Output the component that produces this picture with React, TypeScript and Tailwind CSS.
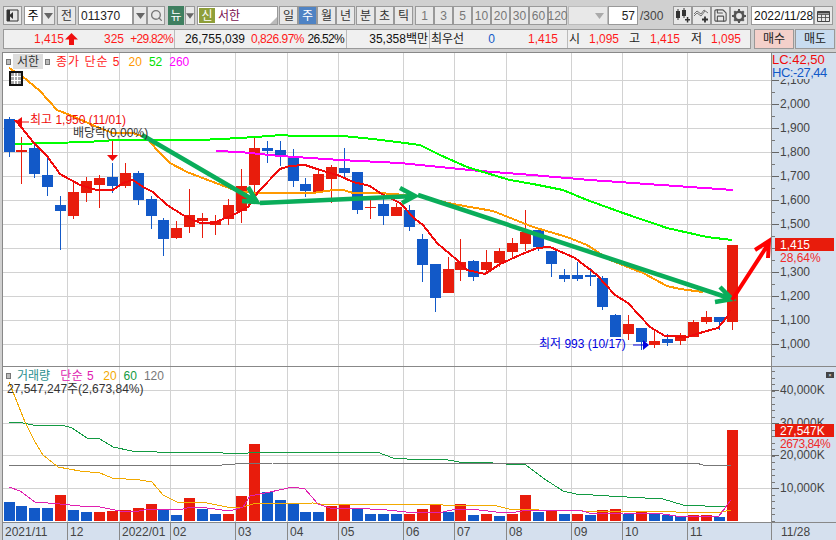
import { Save, Search } from "lucide-react";

const RED = "#e81c0c";
const BLUE = "#1259c8";
const GRID_X = [67, 119, 170, 235, 287, 338, 403, 454, 506, 571, 622, 687];

// x, color, wick top, body top, body bottom, wick bottom
const candles: [number, string, number, number, number, number][] = [
  [9.5, BLUE, 117, 119, 152, 157],
  [21.5, RED, 137, 150, 152, 184],
  [34.5, BLUE, 142, 148, 174, 178],
  [47.5, BLUE, 156, 175, 187, 196],
  [60.5, BLUE, 196, 205, 211, 250],
  [73.5, RED, 183, 192, 216, 219],
  [86.5, RED, 177, 181, 193, 202],
  [99.5, RED, 175, 178, 185, 208],
  [112.5, BLUE, 163, 177, 186, 193],
  [125.5, RED, 163, 173, 186, 188],
  [138.5, BLUE, 171, 173, 200, 205],
  [151.5, BLUE, 196, 199, 216, 229],
  [163.5, BLUE, 218, 220, 239, 256],
  [176.5, RED, 221, 228, 238, 239],
  [189.5, RED, 189, 215, 227, 233],
  [202.5, RED, 213, 218, 221, 238],
  [215.5, RED, 215, 221, 225, 235],
  [228.5, RED, 199, 205, 219, 225],
  [241.5, RED, 169, 186, 211, 223],
  [254.5, RED, 137, 148, 185, 193],
  [267.5, BLUE, 141, 148, 151, 163],
  [280.5, BLUE, 141, 150, 157, 166],
  [293.5, BLUE, 149, 157, 181, 187],
  [305.5, BLUE, 178, 184, 191, 197],
  [318.5, RED, 171, 174, 192, 193],
  [331.5, RED, 165, 167, 179, 203],
  [344.5, BLUE, 148, 168, 173, 177],
  [357.5, BLUE, 172, 172, 210, 214],
  [370.5, RED, 199, 207, 208, 219],
  [383.5, BLUE, 199, 204, 216, 225],
  [396.5, RED, 203, 207, 216, 216],
  [409.5, BLUE, 205, 210, 227, 231],
  [422.5, BLUE, 234, 239, 265, 282],
  [435.5, BLUE, 264, 264, 298, 312],
  [448.5, RED, 257, 269, 293, 293],
  [460.5, RED, 239, 262, 270, 281],
  [473.5, BLUE, 260, 261, 277, 281],
  [486.5, RED, 250, 262, 270, 274],
  [499.5, RED, 248, 251, 263, 267],
  [512.5, RED, 238, 243, 252, 259],
  [525.5, RED, 210, 232, 244, 251],
  [538.5, BLUE, 228, 230, 247, 251],
  [551.5, BLUE, 251, 251, 264, 277],
  [564.5, BLUE, 269, 275, 279, 282],
  [577.5, BLUE, 262, 275, 279, 281],
  [590.5, BLUE, 268, 275, 277, 286],
  [602.5, BLUE, 276, 278, 307, 310],
  [615.5, BLUE, 314, 315, 337, 337],
  [628.5, RED, 315, 324, 334, 340],
  [641.5, BLUE, 328, 328, 342, 350],
  [654.5, RED, 330, 341, 345, 348],
  [667.5, BLUE, 334, 339, 343, 346],
  [680.5, RED, 333, 335, 341, 345],
  [693.5, RED, 320, 322, 337, 337],
  [706.5, RED, 311, 317, 322, 324],
  [719.5, BLUE, 317, 317, 322, 330],
  [732.5, RED, 245, 245, 322, 330],
];

const volumes: [number, string][] = [
  [502, BLUE], [506, BLUE], [508, BLUE], [508, BLUE], [495, RED], [510, BLUE],
  [512, BLUE], [512, RED], [511, RED], [510, RED], [508, RED], [504, RED],
  [509, BLUE], [515, BLUE], [498, RED], [509, BLUE], [514, BLUE], [514, RED],
  [496, RED], [444, RED], [492, BLUE], [500, BLUE], [504, BLUE], [512, BLUE],
  [512, BLUE], [506, RED], [505, RED], [508, BLUE], [514, BLUE], [514, BLUE],
  [514, BLUE], [514, RED], [509, RED], [505, RED], [512, BLUE], [504, RED],
  [515, BLUE], [514, RED], [516, BLUE], [514, RED], [495, RED], [512, BLUE],
  [510, RED], [514, BLUE], [514, RED], [515, BLUE], [510, RED], [509, RED],
  [514, BLUE], [512, RED], [514, BLUE], [515, BLUE], [516, BLUE], [515, RED],
  [515, RED], [517, BLUE], [430, RED],
];

const ma5 = "15,120 22,128 33,142 47,156 60,174 80,185 97,190 113,190 123,183 133,180 143,187 153,192 167,205 183,215 200,223 213,223 233,215 248,207 258,192 280,169 290,166 305,165 320,170 340,176 353,182 370,186 380,193 400,203 415,219 423,225 437,243 457,260 467,270 485,274 500,264 520,255 537,248 550,247 575,258 597,275 615,295 628,303 650,327 665,336 687,337 703,332 718,328 727,317 730,310";
const ma20 = "9,68 22,76 40,91 57,110 70,115 97,127 113,133 133,133 147,138 157,150 170,163 187,172 213,182 240,192 260,193 293,193 313,193 333,190 343,190 353,193 380,193 417,196 453,204 493,211 533,227 567,237 587,245 610,260 643,273 667,286 680,289 703,292";
const ma52 = "15,144 87,142 117,140 200,140 240,138 255,137 282,135 293,136 343,136 373,139 397,142 420,145 440,155 467,167 493,175 510,180 533,184 563,190 587,200 623,213 667,228 707,237 732,240";
const ma260 = "216,151 240,152 280,156 340,160 400,163 440,167 480,171 520,174 590,180 733,190";

const volMa5 = "9,487 20,491 35,502 60,504 80,506 100,507 120,511 133,512 150,509 180,510 190,507 207,508 230,511 243,507 250,496 270,492 293,487 305,489 318,504 330,508 353,508 387,510 416,513 443,512 456,509 479,510 496,512 516,512 529,510 546,510 579,510 589,513 623,513 663,514 676,516 719,516 731,500";
const volMa20 = "9,382 17,402 25,422 35,442 43,455 58,467 80,471 100,473 112,478 140,480 152,482 163,495 177,502 207,503 227,507 243,507 253,504 313,503 320,504 403,505 429,504 443,505 493,505 509,509 539,510 583,511 673,511 676,512 713,513 721,512 731,510";
const volMa60 = "9,422 23,423 33,425 62,425 72,428 87,438 100,439 113,447 132,451 157,452 220,452 223,453 248,453 250,452 377,452 393,458 407,459 443,459 459,462 479,462 506,464 526,465 543,478 563,491 576,494 609,496 663,499 683,505 726,507";
const volMa120 = "9,465 197,465 222,465 235,464 273,463 696,463 703,465 731,465";

// 1,400 sits behind the current price box, 2,100 half behind the HC line
const priceLabels = [
  ["2,100", 21], ["2,000", 45], ["1,900", 69], ["1,800", 93], ["1,700", 117], ["1,600", 141], ["1,500", 165],
  ["1,300", 213], ["1,200", 237], ["1,100", 261], ["1,000", 285],
] as const;
const volLabels = [["40,000K", 17], ["30,000K", 50], ["20,000K", 82], ["10,000K", 115]] as const;
const dateCells = [
  ["w-[65px]", "2021/11"], ["w-[52px]", "12"], ["w-[51px]", "2022/01"], ["w-[65px]", "02"],
  ["w-[52px]", "03"], ["w-[51px]", "04"], ["w-[65px]", "05"], ["w-[51px]", "06"],
  ["w-[52px]", "07"], ["w-[65px]", "08"], ["w-[51px]", "09"], ["w-[65px]", "10"],
  ["w-[84px]", "11"],
];

const priceTicks = Array.from({ length: 26 }, (_, i) => `M0 ${i * 12 + 3.5}h3`).join("");
const volTicks = Array.from({ length: 24 }, (_, i) => `M0 ${i * 6.5 + 4.5}h3`).join("");

const Arrow = () => (
  <svg width="9" height="6" viewBox="0 0 9 6">
    <path d="M0 0h9L4.500 6z" fill="#666" />
  </svg>
);

const Btn = ({ children, className = "bg-[#e8e8e8] text-[#333]" }: { children: React.ReactNode; className?: string }) => (
  <div className={`flex h-[19px] shrink-0 items-center justify-center border border-[#999] ${className}`}>
    {children}
  </div>
);

const GRAY_BTN = "w-[19px] bg-[#e8e8e8] text-[#333]";
const DIM_BTN = "w-[19px] bg-[#e8e8e8] text-[#777]";

const App = () => {
  return (
    <div className="flex h-[540px] w-[836px] flex-col overflow-hidden bg-[#d0d0d0] font-['Liberation_Sans','Noto_Sans_CJK_KR',sans-serif] text-[12px] leading-none">
      {/* toolbar */}
      <div className="ml-[3px] mt-[6px] flex h-[19px] items-center">
        <Btn className={GRAY_BTN}>
          <svg width="13" height="13" viewBox="0 0 13 13">
            <path d="M1 1h11v11H1z" fill="none" stroke="#333" />
            <path d="M1 1h3v11H1zM7 3v7L3 6.500z" fill="#333" />
          </svg>
        </Btn>
        <div className="ml-[2px] flex h-[19px] w-[18px] items-center justify-center border border-[#999] bg-white">주</div>
        <Btn className="w-[13px] bg-[#e8e8e8]"><Arrow /></Btn>
        <Btn className="ml-[2px] w-[19px] bg-[#e8e8e8] text-[#333]">전</Btn>
        <div className="ml-[2px] flex h-[19px] w-[55px] items-center border border-[#999] bg-white pl-[2px] text-[#222]">011370</div>
        <Btn className="w-[14px] bg-[#e8e8e8]"><Arrow /></Btn>
        <Btn className="w-[18px] bg-[#e8e8e8]"><Search size={13} color="#777" strokeWidth={2.5} /></Btn>
        <div className="ml-[3px] flex h-[19px] w-[16px] items-center justify-center bg-[#3f7f60] text-white">뉴</div>
        <Btn className="ml-[1px] w-[10px] bg-[#e8e8e8]"><Arrow /></Btn>
        <div className="relative ml-[2px] flex h-[19px] w-[81px] items-center border border-[#999] bg-white">
          <div className="ml-px flex h-[15px] w-[16px] items-center justify-center bg-[#8f9f3a] text-white">신</div>
          <span className="ml-[3px] text-[#7a1050]">서한</span>
          <div className="absolute bottom-0 right-0 h-0 w-0 border-b-[7px] border-l-[7px] border-b-[#bbb] border-l-transparent" />
        </div>
        <Btn className="ml-px w-[19px] bg-[#e8e8e8] text-[#333]">일</Btn>
        <Btn className="w-[19px] bg-[#4f83c4] text-white">주</Btn>
        <Btn className={GRAY_BTN}>월</Btn>
        <Btn className={GRAY_BTN}>년</Btn>
        <Btn className="ml-px w-[19px] bg-[#e8e8e8] text-[#333]">분</Btn>
        <Btn className={GRAY_BTN}>초</Btn>
        <Btn className={GRAY_BTN}>틱</Btn>
        <Btn className="ml-[2px] w-[19px] bg-[#e8e8e8] text-[#777]">1</Btn>
        <Btn className={DIM_BTN}>3</Btn>
        <Btn className={DIM_BTN}>5</Btn>
        <Btn className={DIM_BTN}>10</Btn>
        <Btn className={DIM_BTN}>20</Btn>
        <Btn className={DIM_BTN}>30</Btn>
        <Btn className={DIM_BTN}>60</Btn>
        <Btn className={DIM_BTN}>120</Btn>
        <div className="ml-px flex h-[19px] w-[40px] items-center justify-end border border-[#bbb] bg-[#e8e8e8] pr-[3px]">
          <svg width="9" height="6" viewBox="0 0 9 6">
            <path d="M0 0h9L4.500 6z" fill="#aaa" />
          </svg>
        </div>
        <div className="flex h-[19px] w-[30px] items-center justify-end border border-[#999] bg-white pr-[2px] text-[#222]">57</div>
        <span className="ml-[2px] w-[33px] text-[#444]">/300</span>
        <Btn className={GRAY_BTN}>
          <svg width="15" height="15" viewBox="0 0 15 15" fill="#333">
            <path d="M1 3h4v7H1zM2.500 1h1v11h-1zM7 2h4v6H7zM8.500 0h1v10h-1zM10 11h5v1.500h-5z" />
            <path d="M11.800 9h1.500v5.500h-1.500z" />
          </svg>
        </Btn>
        <Btn className={GRAY_BTN}>
          <svg width="15" height="15" viewBox="0 0 15 15" fill="none" stroke="#555">
            <path d="M0 6l3-3 4 3 3-4 4 3M0 8l3-3 4 3 4-5" strokeWidth="0.8" />
            <path d="M8 11.500h6M11 8.500v6" strokeWidth="1.800" stroke="#333" />
          </svg>
        </Btn>
        <Btn className={GRAY_BTN}><Save size={15} color="#555" strokeWidth={1.8} /></Btn>
        <Btn className="w-[18px] bg-[#e8e8e8]">
          <svg width="14" height="14" viewBox="0 0 14 14">
            <circle cx="7" cy="7" r="4.200" fill="none" stroke="#555" strokeWidth="2.600" />
            <path d="M6 0h2v2.500H6zM6 11.500h2V14H6zM0 6h2.500v2H0zM11.500 6H14v2h-2.500zM1.500 3 3 1.500l2 2L3.500 5zM12.500 11 11 12.500l-2-2 1.500-1.500zM11 1.500 12.500 3l-2 2L9 3.500zM3 12.500 1.500 11l2-2L5 10.500z" fill="#555" />
          </svg>
        </Btn>
        <div className="ml-[3px] flex h-[19px] w-[63px] items-center border border-[#999] bg-white pl-[2px] text-[#111]">2022/11/28</div>
        <Btn className={GRAY_BTN}>
          <svg width="13" height="12" viewBox="0 0 13 12" fill="none" stroke="#444">
            <path d="M.5 1.500h12v10H.5z" />
            <path d="M.5 4.500h12M.5 7.500h12M4.500 4.500v7M8.500 4.500v7" strokeWidth="0.8" />
            <path d="M.5 2.500h12" strokeWidth="2" />
          </svg>
        </Btn>
      </div>

      {/* quote row */}
      <div className="ml-[3px] mt-[4px] flex h-[20px] shrink-0">
        <div className="flex w-[748px] items-center border border-[#999] bg-[#f0f0f0] text-[#ff1a1a]">
          <span className="w-[60px] text-right">1,415</span>
          <svg className="ml-px" width="13" height="12" viewBox="0 0 13 12">
            <path d="M6.500 0 13 6.500H9V12H4V6.500H0z" fill="#f01010" />
          </svg>
          <span className="w-[46px] text-right">325</span>
          <span className="w-[49px] text-right tracking-[-0.7px]">+29.82%</span>
          <div className="ml-px h-full w-px bg-[#bbb]" />
          <span className="w-[70px] text-right text-[#111]">26,755,039</span>
          <span className="w-[59px] text-right tracking-[-0.5px]">0,826.97%</span>
          <span className="w-[40px] text-right tracking-[-0.7px] text-[#111]">26.52%</span>
          <div className="ml-[2px] h-full w-px bg-[#bbb]" />
          <span className="w-[81px] text-right text-[#111]">35,358백만</span>
          <div className="ml-px h-full w-px bg-[#bbb]" />
          <span className="ml-px w-[38px] text-[#222]">최우선</span>
          <span className="w-[26px] text-right text-[#1259c8]">0</span>
          <span className="w-[63px] text-right">1,415</span>
          <div className="ml-[9px] h-full w-px bg-[#bbb]" />
          <span className="ml-px w-[11px] text-[#222]">시</span>
          <span className="w-[39px] text-right">1,095</span>
          <span className="ml-[10px] w-[11px] text-[#222]">고</span>
          <span className="w-[40px] text-right">1,415</span>
          <span className="ml-[11px] w-[11px] text-[#222]">저</span>
          <span className="w-[39px] text-right">1,095</span>
        </div>
        <div className="ml-[3px] flex w-[40px] items-center justify-center border border-[#999] bg-[#f4d0ca] text-[#222]">매수</div>
        <div className="ml-px flex w-[40px] items-center justify-center border border-[#999] bg-[#c8dcf0] text-[#222]">매도</div>
      </div>

      {/* price panel */}
      <div className="mt-[3px] ml-[2px] flex h-[314px] shrink-0 border-l border-t border-[#888]">
        <div className="relative w-[768px] bg-white">
          <svg className="absolute inset-0" width="768" height="313" viewBox="3 53 768 313">
            <g stroke="#d2d2d2" shapeRendering="crispEdges">
              {GRID_X.map((x) => (
                <line key={x} x1={x + 0.5} x2={x + 0.5} y1="53" y2="366" />
              ))}
              {[80, 104, 128, 152, 176, 200, 224, 248, 272, 296, 320, 344].map((y) => (
                <line key={y} x1="3" x2="771" y1={y + 0.5} y2={y + 0.5} />
              ))}
            </g>
            <g shapeRendering="crispEdges">
              {candles.map(([x, c, wt, bt, bb, wb]) => (
                <g key={x}>
                  <line x1={x} x2={x} y1={wt} y2={wb} stroke={c} />
                  <rect x={x - 5.5} y={bt} width="11" height={bb - bt} fill={c} />
                </g>
              ))}
            </g>
            <g fill="none" strokeWidth="2" shapeRendering="crispEdges">
              <polyline points={ma260} stroke="#ff00ff" />
              <polyline points={ma52} stroke="#00ff00" />
              <polyline points={ma20} stroke="#ff9900" />
              <polyline points={ma5} stroke="#f00a0a" />
            </g>
            <g fill="none" stroke="#0aad5a" strokeWidth="4.500">
              <path d="M142 135 257 202M248 187 257 202 242 201" />
              <path d="M260 203 415 196M400 188 415 196 402 203" />
              <path d="M418 195 732 299M720 287 732 299 715 302" />
            </g>
            <path d="M732 300 769 243M755 250 769 241 768 258" fill="none" stroke="#ff0000" strokeWidth="4" />
            <path d="M15 122 22 117V127z" fill="#f00a0a" />
            <path d="M20 122h9" stroke="#f00a0a" />
            <path d="M112.500 141v14" stroke="#f00a0a" />
            <path d="M107 155h11l-5.500 6z" fill="#f00a0a" />
            <path d="M633 345h10" stroke="#0000e0" />
            <path d="M643 340 649 345 643 350z" fill="#0000e0" />
          </svg>

          {/* legend */}
          <div className="absolute left-[3px] top-[1px] flex items-center">
            <div className="h-[6px] w-[5px] border border-[#777] bg-[#bbb]" />
            <div className="ml-[2px] flex h-[15px] w-[30px] items-center justify-center bg-[#ddd] text-[#333]">서한</div>
            <div className="ml-[2px] h-[6px] w-[5px] border border-[#777] bg-[#bbb]" />
            <span className="ml-[6px] tracking-[1px] text-[#ff1a1a]">종가 단순 5</span>
            <span className="ml-[8px] text-[#ff9900]">20</span>
            <span className="ml-[7px] text-[#00e000]">52</span>
            <span className="ml-[7px] text-[#ff00ff]">260</span>
          </div>
          <div className="absolute left-[6px] top-[18px] grid h-[15px] w-[14px] grid-cols-3 grid-rows-3 gap-px border-2 border-[#111] bg-white">
            <div className="bg-[#aaa]" /><div className="bg-[#aaa]" /><div className="bg-[#aaa]" />
            <div className="bg-[#aaa]" /><div className="bg-[#aaa]" /><div className="bg-[#aaa]" />
            <div className="bg-[#aaa]" /><div className="bg-[#aaa]" /><div className="bg-[#aaa]" />
          </div>
          <span className="absolute left-[27px] top-[61px] text-[#f00a0a]">최고 1,950 (11/01)</span>
          <span className="absolute left-[70px] top-[74px] text-[#333]">배당락(0,00%)</span>
          <span className="absolute left-[536px] top-[285px] text-[#0000e0]">최저 993 (10/17)</span>
        </div>

        <div className="relative flex-1 border-l border-[#888] bg-[#d5e0ee] text-[#444]">
          <svg className="absolute inset-0" width="8" height="313">
            <path d={priceTicks} stroke="#777" shapeRendering="crispEdges" />
          </svg>
          {priceLabels.map(([label, top]) => (
            <div key={label} className="absolute left-0 flex items-center gap-[1px]" style={{ top }}>
              <div className="h-px w-[7px] bg-[#666]" />
              <span>{label}</span>
            </div>
          ))}
          <div className="absolute left-0 top-0 bg-[#d5e0ee] pr-px text-[13px] leading-[13px]">
            <div className="text-[#f00a0a]">LC:42,50</div>
            <div className="tracking-[-0.5px] text-[#1259c8]">HC:-27,44</div>
          </div>
          <div className="absolute left-[3px] top-[185px] flex h-[13px] w-[59px] items-center bg-[#e81c0c] pl-[5px] text-white">1,415</div>
          <span className="absolute left-[8px] top-[199px] text-[#f02a2a]">28,64%</span>
        </div>
      </div>

      {/* volume panel */}
      <div className="ml-[2px] flex h-[156px] shrink-0 border-l border-t border-[#888]">
        <div className="relative w-[768px] bg-white">
          <svg className="absolute inset-0" width="768" height="155" viewBox="3 367 768 155">
            <g stroke="#d2d2d2" shapeRendering="crispEdges">
              {GRID_X.map((x) => (
                <line key={x} x1={x + 0.5} x2={x + 0.5} y1="367" y2="522" />
              ))}
              {[390, 423, 455, 488].map((y) => (
                <line key={y} x1="3" x2="771" y1={y + 0.5} y2={y + 0.5} />
              ))}
            </g>
            <g shapeRendering="crispEdges">
              {volumes.map(([top, c], i) => (
                <rect key={i} x={candles[i][0] - 5.5} y={top} width="11" height={521 - top} fill={c} />
              ))}
            </g>
            <g fill="none" strokeWidth="1" shapeRendering="crispEdges">
              <polyline points={volMa60} stroke="#129a42" />
              <polyline points={volMa120} stroke="#777" />
              <polyline points={volMa20} stroke="#f2a900" />
              <polyline points={volMa5} stroke="#e020b0" />
            </g>
          </svg>
          <div className="absolute left-[3px] top-[3px] flex items-center">
            <div className="h-[6px] w-[5px] border border-[#777] bg-[#bbb]" />
            <span className="ml-[6px] text-[#2a8f8f]">거래량</span>
            <span className="ml-[10px] tracking-[0.5px] text-[#e020b0]">단순 5</span>
            <span className="ml-[9px] text-[#f2a900]">20</span>
            <span className="ml-[7px] text-[#129a42]">60</span>
            <span className="ml-[7px] text-[#777]">120</span>
          </div>
          <span className="absolute left-[4px] top-[16px] text-[#333]">27,547,247주(2,673,84%)</span>
        </div>
        <div className="relative flex-1 border-l border-[#888] bg-[#d5e0ee] text-[#444]">
          <svg className="absolute inset-0" width="8" height="155">
            <path d={volTicks} stroke="#777" shapeRendering="crispEdges" />
          </svg>
          <div className="absolute right-[2px] top-[5px] flex h-[6px] w-[8px] items-center justify-center bg-[#444] text-[5px] text-white">×</div>
          {volLabels.map(([label, top]) => (
            <div key={label} className="absolute left-0 flex items-center gap-[1px]" style={{ top }}>
              <div className="h-px w-[7px] bg-[#666]" />
              <span>{label}</span>
            </div>
          ))}
          <div className="absolute left-[3px] top-[57px] flex h-[13px] w-[59px] items-center bg-[#e81c0c] pl-[5px] text-white">27,547K</div>
          <span className="absolute left-[8px] top-[71px] tracking-[-0.5px] text-[#f02a2a]">2673,84%</span>
        </div>
      </div>

      {/* date axis */}
      <div className="ml-[2px] flex flex-1 border-l border-t border-[#888] bg-[#d5e0ee] text-[#444]">
        {dateCells.map(([w, label]) => (
          <div key={label} className={`${w} flex items-center border-r border-[#888] pl-[2px]`}>
            {label}
          </div>
        ))}
        <div className="flex flex-1 items-center pl-[9px]">11/28</div>
      </div>
    </div>
  );
};

export default App;
